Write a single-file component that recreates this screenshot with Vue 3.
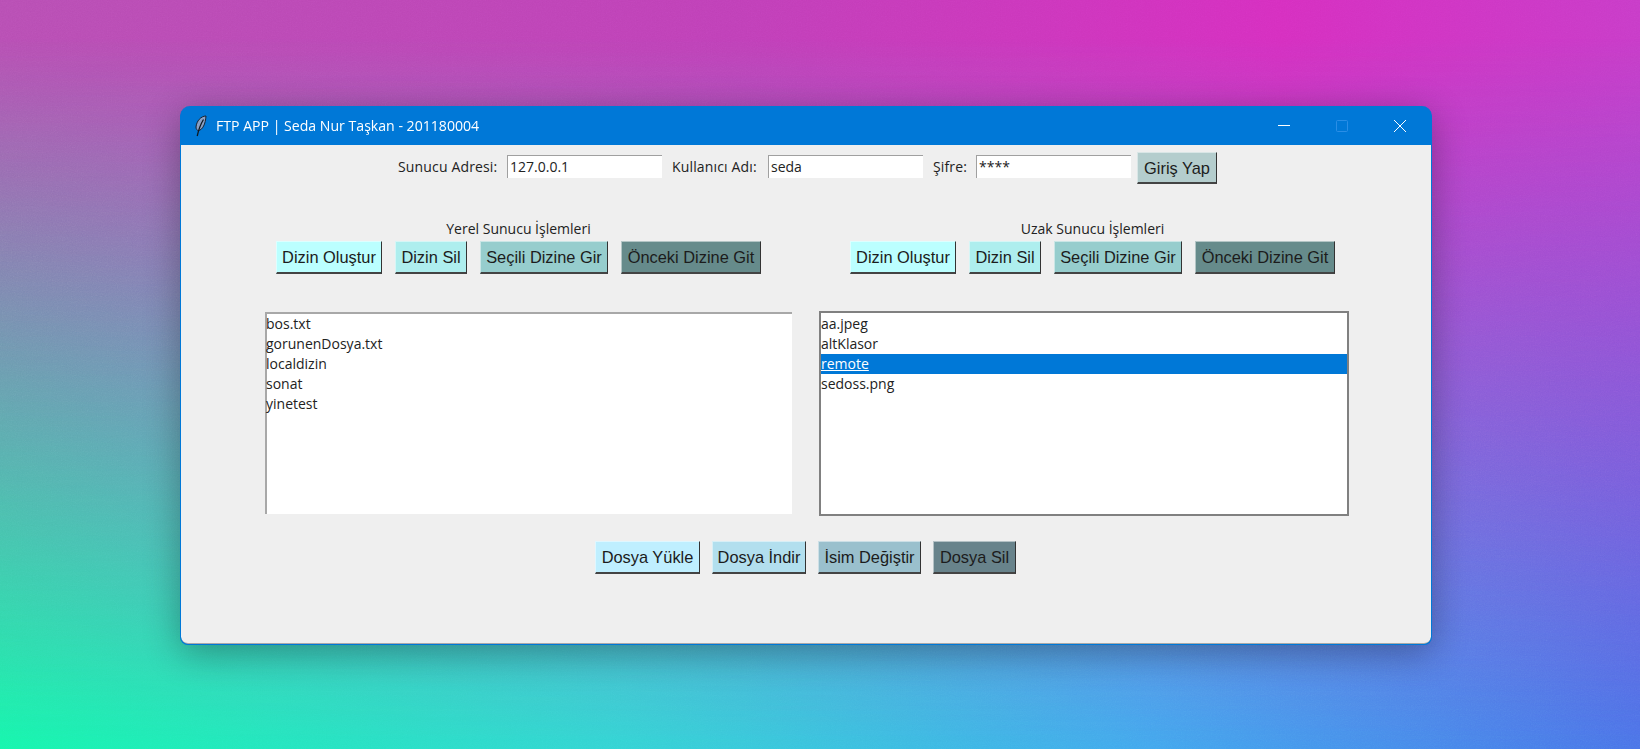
<script setup>
const localFiles = ['bos.txt', 'gorunenDosya.txt', 'localdizin', 'sonat', 'yinetest']
const remoteFiles = ['aa.jpeg', 'altKlasor', 'remote', 'sedoss.png']
const dirButtons = [
  { label: 'Dizin Oluştur', color: 'c1' },
  { label: 'Dizin Sil', color: 'c2' },
  { label: 'Seçili Dizine Gir', color: 'c3' },
  { label: 'Önceki Dizine Git', color: 'c4' }
]
const fileButtons = [
  { label: 'Dosya Yükle', color: 'b1' },
  { label: 'Dosya İndir', color: 'b2' },
  { label: 'İsim Değiştir', color: 'b3' },
  { label: 'Dosya Sil', color: 'b4' }
]
const panels = ['Yerel Sunucu İşlemleri', 'Uzak Sunucu İşlemleri']
</script>

<template>
  <div class="desktop">
    <svg class="grain" width="1640" height="749" aria-hidden="true">
      <filter id="grain-noise">
        <feTurbulence type="fractalNoise" baseFrequency="0.8" numOctaves="2" stitchTiles="stitch" />
        <feColorMatrix type="saturate" values="0" />
      </filter>
      <rect width="1640" height="749" filter="url(#grain-noise)" />
    </svg>
    <div class="window">
      <header class="titlebar">
        <svg class="feather" width="12" height="22" viewBox="0 0 12 22">
          <path d="M11 1 C6 1 1.5 6 1 12 C1 14 2 15.5 3.5 15.5 C7.5 15 10.5 9 11 1 Z" fill="#8aa0c4" stroke="#18222f" stroke-width="1" />
          <path d="M8.5 4.5 C6 8.5 4 13 2.2 21" fill="none" stroke="#101820" stroke-width="1.3" />
        </svg>
        <span class="title">FTP APP | Seda Nur Taşkan - 201180004</span>
        <div class="controls">
          <svg width="14" height="14" viewBox="0 0 14 14"><path d="M1 6.5H13" stroke="#fff" stroke-width="1" /></svg>
          <svg width="14" height="14" viewBox="0 0 14 14"><rect x="1.5" y="1.5" width="11" height="11" rx="1" fill="none" stroke="#2a8ee6" stroke-width="1" /></svg>
          <svg width="14" height="14" viewBox="0 0 14 14"><path d="M1 1L13 13M13 1L1 13" stroke="#fff" stroke-width="1" /></svg>
        </div>
      </header>

      <main class="client">
        <section class="login">
          <label class="lbl l1">Sunucu Adresi:</label>
          <div class="entry">127.0.0.1</div>
          <label class="lbl l2">Kullanıcı Adı:</label>
          <div class="entry">seda</div>
          <label class="lbl l3">Şifre:</label>
          <div class="entry">****</div>
          <button class="btn login-btn">Giriş Yap</button>
        </section>

        <section class="panels">
          <div v-for="p in panels" :key="p" class="panel">
            <div class="panel-title">{{ p }}</div>
            <div class="btn-row">
              <button v-for="b in dirButtons" :key="b.label" class="btn" :class="b.color">{{ b.label }}</button>
            </div>
          </div>
        </section>

        <section class="lists">
          <ul class="list local">
            <li v-for="f in localFiles" :key="f">{{ f }}</li>
          </ul>
          <ul class="list remote">
            <li v-for="f in remoteFiles" :key="f" :class="{ selected: f === 'remote' }"><span>{{ f }}</span></li>
          </ul>
        </section>

        <section class="file-row">
          <button v-for="b in fileButtons" :key="b.label" class="btn" :class="b.color">{{ b.label }}</button>
        </section>
      </main>
    </div>
  </div>
</template>

<style>
html, body { margin: 0; padding: 0; overflow: hidden; }
</style>

<style scoped>
.desktop {
  position: relative;
  width: 1640px;
  height: 749px;
  overflow: hidden;
  background: linear-gradient(90deg, #b84fb4 0%, #c040b8 45%, #d62fc0 78%, #c83cc8 100%);
}
.desktop::before {
  content: "";
  position: absolute;
  inset: 0;
  background: linear-gradient(90deg, #16f7ac 0%, #34d4d4 38%, #42a8ee 70%, #4a74e8 100%);
  -webkit-mask-image: linear-gradient(180deg, transparent 5%, #000 100%);
  mask-image: linear-gradient(180deg, transparent 5%, #000 100%);
}
.grain {
  position: absolute;
  inset: 0;
  opacity: 0.14;
  mix-blend-mode: overlay;
}
.window {
  position: absolute;
  left: 180px;
  top: 106px;
  width: 1252px;
  height: 539px;
  box-sizing: border-box;
  border: 1px solid #0078d7;
  border-top: 0;
  border-radius: 10px 10px 8px 8px;
  background: #0078d7;
  box-shadow: 0 8px 36px rgba(0, 0, 0, 0.32);
  display: flex;
  flex-direction: column;
  overflow: hidden;
}
.titlebar {
  height: 39px;
  flex: none;
  display: flex;
  align-items: center;
  color: #fff;
  font: 14.1px "Open Sans", "Noto Sans", sans-serif;
}
.feather { margin-left: 14px; margin-top: 1px; flex: none; }
.title { margin-left: 9px; }
.controls {
  margin-left: auto;
  margin-right: 24px;
  display: flex;
  gap: 44px;
}
.client {
  flex: 1;
  background: #efefef;
  border-radius: 0 0 7px 7px;
  border-bottom: 1px solid #a8a8a8;
  color: #222;
  font: 14px "Open Sans", "Noto Sans", sans-serif;
  display: flex;
  flex-direction: column;
}
.login {
  display: flex;
  align-items: flex-start;
  padding: 7px 0 0 217px;
  height: 32px;
}
.lbl { margin-top: 3px; line-height: 23px; white-space: nowrap; letter-spacing: 0.15px; }
.l1 { width: 109px; }
.l2 { width: 96px; margin-left: 10px; }
.l3 { width: 43px; margin-left: 10px; }
.entry {
  box-sizing: border-box;
  width: 155px;
  height: 23px;
  margin-top: 3px;
  background: #fff;
  border-top: 1px solid #a0a0a0;
  border-left: 1px solid #a0a0a0;
  padding-left: 2px;
  line-height: 21px;
}
.btn {
  box-sizing: border-box;
  height: 33px;
  padding: 1px 0 0;
  margin: 0;
  color: #1c1c1c;
  font: 16.4px "Liberation Sans", Arial, sans-serif;
  white-space: nowrap;
  border-style: solid;
  border-width: 1px 1px 2px 1px;
  border-top-color: rgba(255, 255, 255, 0.5);
  border-left-color: rgba(255, 255, 255, 0.5);
  border-right-color: #333;
  border-bottom-color: #444;
}
.login-btn { width: 80px; height: 32px; margin-left: 6px; background: #b4cdcd; }
.panels {
  display: flex;
  gap: 89px;
  padding: 33px 0 0 95px;
}
.panel { width: 485px; }
.panel-title {
  text-align: center;
  line-height: 24px;
  height: 24px;
}
.btn-row {
  display: grid;
  grid-template-columns: 106px 72px 128px 140px;
  gap: 13px;
}
.c1 { background: #bbffff; }
.c2 { background: #aeeeee; }
.c3 { background: #96cdcd; }
.c4 { background: #668b8b; }
.b1 { background: #bfefff; }
.b2 { background: #b2dfee; }
.b3 { background: #9ac0cd; }
.b4 { background: #68838b; }
.lists {
  display: flex;
  gap: 27px;
  padding: 37px 0 0 84px;
  align-items: flex-start;
}
.list {
  box-sizing: border-box;
  list-style: none;
  margin: 0;
  background: #fff;
  line-height: 20px;
}
.local {
  width: 527px;
  height: 202px;
  margin-top: 1px;
  padding: 0;
  border-top: 2px solid #a8a8a8;
  border-left: 2px solid #a8a8a8;
}
.local li { margin-left: -1px; }
.remote {
  width: 530px;
  height: 205px;
  padding: 1px 0 0 0;
  border: 2px solid #808080;
}
.selected { background: #0078d7; color: #fff; }
.selected span { text-decoration: underline; }
.file-row {
  display: grid;
  grid-template-columns: 105px 94px 103px 83px;
  gap: 12px;
  padding: 25px 0 0 414px;
}
</style>
